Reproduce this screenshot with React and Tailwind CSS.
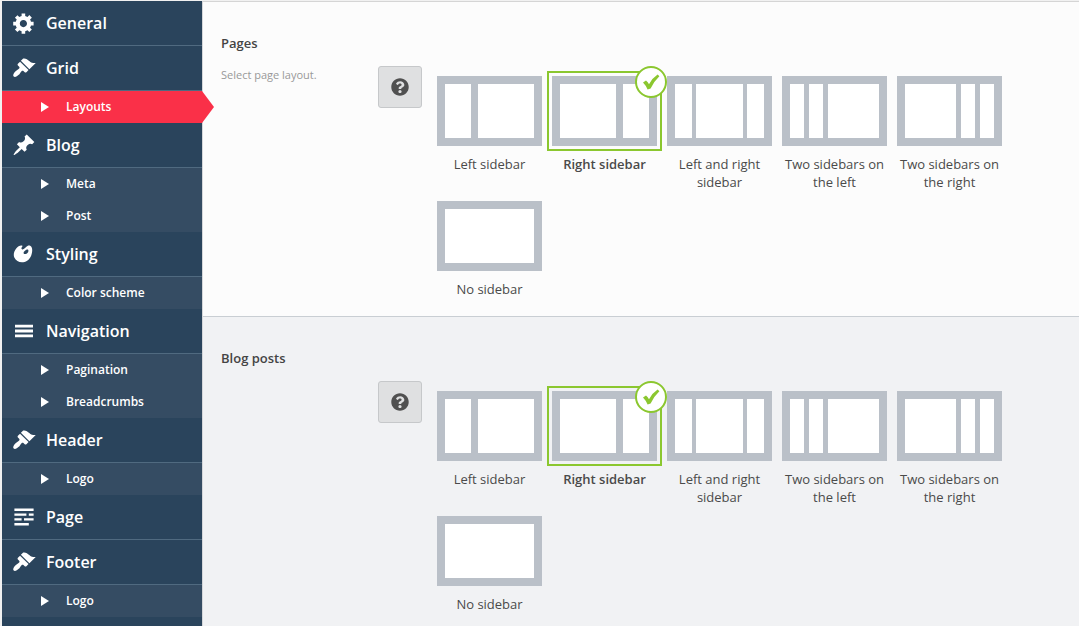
import { useState } from "react";
import { FaQuestionCircle } from "react-icons/fa";

const ICONS = {
  gear: "M18 12h-2.18c-.17.7-.44 1.35-.81 1.93l1.54 1.54-2.1 2.1-1.54-1.54c-.58.36-1.23.63-1.91.79V19H8v-2.18c-.68-.16-1.33-.43-1.91-.79l-1.54 1.54-2.12-2.12 1.54-1.54c-.36-.58-.63-1.23-.79-1.91H1V9.03h2.17c.16-.7.44-1.35.8-1.94L2.43 5.55l2.1-2.1 1.54 1.54c.58-.37 1.24-.64 1.93-.81V2h3v2.18c.68.16 1.33.43 1.91.79l1.54-1.54 2.12 2.12-1.54 1.54c.36.59.64 1.24.8 1.94H18V12zm-8.5 1.5c1.66 0 3-1.34 3-3s-1.34-3-3-3-3 1.34-3 3 1.34 3 3 3z",
  brush:
    "M14.48 11.06L7.41 3.99l1.5-1.5c.5-.56 2.3-.47 3.51.32 1.21.8 1.43 1.28 2.91 2.1 1.18.64 2.45 1.26 4.45.85zm-.71.71L6.7 4.7 4.93 6.47c-.39.39-.39 1.02 0 1.41l1.06 1.06c.39.39.39 1.03 0 1.42-.6.6-1.43 1.11-2.21 1.69-.35.26-.7.53-1.01.84C1.43 14.23.4 16.08 1.4 17.07c.99 1 2.84-.03 4.18-1.36.31-.31.58-.66.85-1.02.57-.78 1.08-1.61 1.69-2.21.39-.39 1.02-.39 1.41 0l1.06 1.06c.39.39 1.02.39 1.41 0z",
  pin: "M10.44 3.02l1.82-1.82 6.36 6.35-1.83 1.82c-1.05-.68-2.48-.57-3.41.36l-.75.75c-.92.93-1.04 2.35-.35 3.41l-1.83 1.82-2.41-2.41-2.8 2.79c-.42.42-3.38 2.71-3.8 2.29s1.86-3.39 2.28-3.81l2.79-2.79L4.1 9.36l1.83-1.82c1.05.69 2.48.57 3.4-.36l.75-.75c.93-.92 1.05-2.35.36-3.41z",
  palette:
    "M8.55 3.06c1.01.34-1.95 2.01-.1 3.13 1.04.63 3.31-2.22 4.45-2.86.97-.54 2.67-.65 3.53 1.23 1.09 2.38.14 8.57-3.79 11.06-3.97 2.5-8.97 1.23-10.7-2.66-2.01-4.53 3.12-11.09 6.61-9.9zm1.21 6.45c.73 1.64 4.7-.5 3.79-2.8-.59-1.49-4.48 1.25-3.79 2.8z",
  menu: "M17.5 7V4.700H2.500V7h15zm0 4.150V8.850H2.500v2.300h15zm0 4.150V13H2.500v2.300h15z",
  text: "M18 3v2H2V3h16zm-6 4v2H2V7h10zm6 0v2h-4V7h4zM8 11v2H2v-2h6zm10 0v2h-8v-2h8zm-4 4v2H2v-2h12z",
};

const MENU = [
  { label: "General", icon: "gear" },
  { label: "Grid", icon: "brush", items: ["Layouts"] },
  { label: "Blog", icon: "pin", items: ["Meta", "Post"] },
  { label: "Styling", icon: "palette", items: ["Color scheme"] },
  { label: "Navigation", icon: "menu", items: ["Pagination", "Breadcrumbs"] },
  { label: "Header", icon: "brush", items: ["Logo"] },
  { label: "Page", icon: "text" },
  { label: "Footer", icon: "brush", items: ["Logo"] },
];

const LAYOUTS = [
  { id: "left", label: "Left sidebar", columns: "grid-cols-[26fr_56fr] gap-[7px]", count: 2 },
  { id: "right", label: "Right sidebar", columns: "grid-cols-[56fr_26fr] gap-[7px]", count: 2 },
  { id: "both", label: "Left and right sidebar", columns: "grid-cols-[17fr_47fr_17fr] gap-1", count: 3 },
  { id: "two-left", label: "Two sidebars on the left", columns: "grid-cols-[14fr_14fr_51fr] gap-[5px]", count: 3 },
  { id: "two-right", label: "Two sidebars on the right", columns: "grid-cols-[51fr_14fr_14fr] gap-[5px]", count: 3 },
  { id: "none", label: "No sidebar", columns: "grid-cols-1", count: 1 },
];

function MenuIcon({ name }) {
  return (
    <svg viewBox="0 0 20 20" className="size-6 shrink-0 fill-current" aria-hidden="true">
      <path d={ICONS[name]} />
    </svg>
  );
}

function SubItem({ label }) {
  const active = label === "Layouts";
  return (
    <li>
      <a
        href="#"
        aria-current={active ? "page" : undefined}
        className={
          "relative flex h-8 items-center gap-[17px] pl-[39px] text-[12px] leading-[18px] font-semibold " +
          (active ? "bg-[#fa3048]" : "bg-[#354c63]")
        }
      >
        <svg viewBox="0 0 8 10" className="h-[10px] w-2 fill-current" aria-hidden="true">
          <path d="M0 0L8 5L0 10Z" />
        </svg>
        {label}
        {active && (
          <svg viewBox="0 0 12 32" className="absolute top-0 left-full h-8 w-3 fill-[#fa3048]" aria-hidden="true">
            <path d="M0 0L12 16L0 32Z" />
          </svg>
        )}
      </a>
    </li>
  );
}

function Sidebar() {
  return (
    <nav className="w-[201px] shrink-0 border-r border-[#d5d7da] bg-[#2a445c] text-white">
      <ul>
        {MENU.map((group) => (
          <li key={group.label}>
            <a
              href="#"
              className="flex h-[45px] items-center gap-[10px] border-b border-[#506a80] bg-[#2a445c] pl-[10px] text-[16px] leading-6 font-semibold"
            >
              <MenuIcon name={group.icon} />
              {group.label}
            </a>
            {group.items && (
              <ul>
                {group.items.map((item) => (
                  <SubItem key={item} label={item} />
                ))}
              </ul>
            )}
          </li>
        ))}
      </ul>
    </nav>
  );
}

function LayoutOption({ group, layout, checked, onSelect }) {
  return (
    <label className="flex w-[115px] cursor-pointer flex-col gap-1">
      <input
        type="radio"
        name={group}
        value={layout.id}
        checked={checked}
        onChange={() => onSelect(layout.id)}
        className="sr-only"
      />
      <span className={"relative block border-2 p-[3px] " + (checked ? "border-[#8bc72f]" : "border-transparent")}>
        <span className={"grid h-[70px] bg-[#bac0c8] p-2 " + layout.columns}>
          {Array.from({ length: layout.count }, (_, i) => (
            <span key={i} className="bg-white" />
          ))}
        </span>
        {checked && (
          <span className="absolute -top-[7px] -right-[7px] z-10 flex size-8 items-center justify-center rounded-full border-2 border-[#8bc72f] bg-white">
            <svg viewBox="0 0 18 16" className="h-4 w-[18px] fill-[#8bc72f]" aria-hidden="true">
              <path d="M1 8.6L4 6.6Q6 8.2 7 10.2Q10.4 4 15.6 0.6L17.4 2.2Q11.6 7.6 8.6 14.6L5.6 15.6Q4 11.600 1 8.600Z" />
            </svg>
          </span>
        )}
      </span>
      <span className={"text-center text-[13px] leading-[18px] text-[#4a4a4a] " + (checked ? "font-semibold" : "")}>
        {layout.label}
      </span>
    </label>
  );
}

function Section({ title, description, group, className }) {
  const [selected, setSelected] = useState("right");
  return (
    <section className={"flex px-[18px] " + className}>
      <div className="w-[157px] shrink-0 pt-8">
        <h2 className="text-[13px] leading-[18px] font-semibold text-[#444]">{title}</h2>
        {description && <p className="mt-[14px] text-[11px] leading-[18px] text-[#999]">{description}</p>}
      </div>
      <div className="flex flex-1 items-start gap-[10px] pt-16">
        <button
          type="button"
          aria-label={"Help: " + title}
          className="flex h-[42px] w-11 shrink-0 items-center justify-center rounded-[3px] border border-[#c6c8ca] bg-[#dfe0e1] text-[#505050]"
        >
          <FaQuestionCircle className="size-[18px]" />
        </button>
        <div role="radiogroup" aria-label={title} className="flex flex-1 flex-wrap gap-y-[5px] pt-[5px]">
          {LAYOUTS.map((layout) => (
            <LayoutOption
              key={layout.id}
              group={group}
              layout={layout}
              checked={selected === layout.id}
              onSelect={setSelected}
            />
          ))}
        </div>
      </div>
    </section>
  );
}

export default function App() {
  return (
    <div className="flex min-h-screen bg-[#f1f1f1] pt-px pl-[2px] font-['Open_Sans',sans-serif]">
      <Sidebar />
      <main className="min-w-0 flex-1 border-t border-[#d5d5d5] bg-[#f1f2f4]">
        <Section
          title="Pages"
          description="Select page layout."
          group="pages"
          className="border-b border-[#c9ced3] bg-[#fcfcfc] pb-[18px]"
        />
        <Section title="Blog posts" group="posts" className="bg-[#f1f2f4]" />
      </main>
    </div>
  );
}
